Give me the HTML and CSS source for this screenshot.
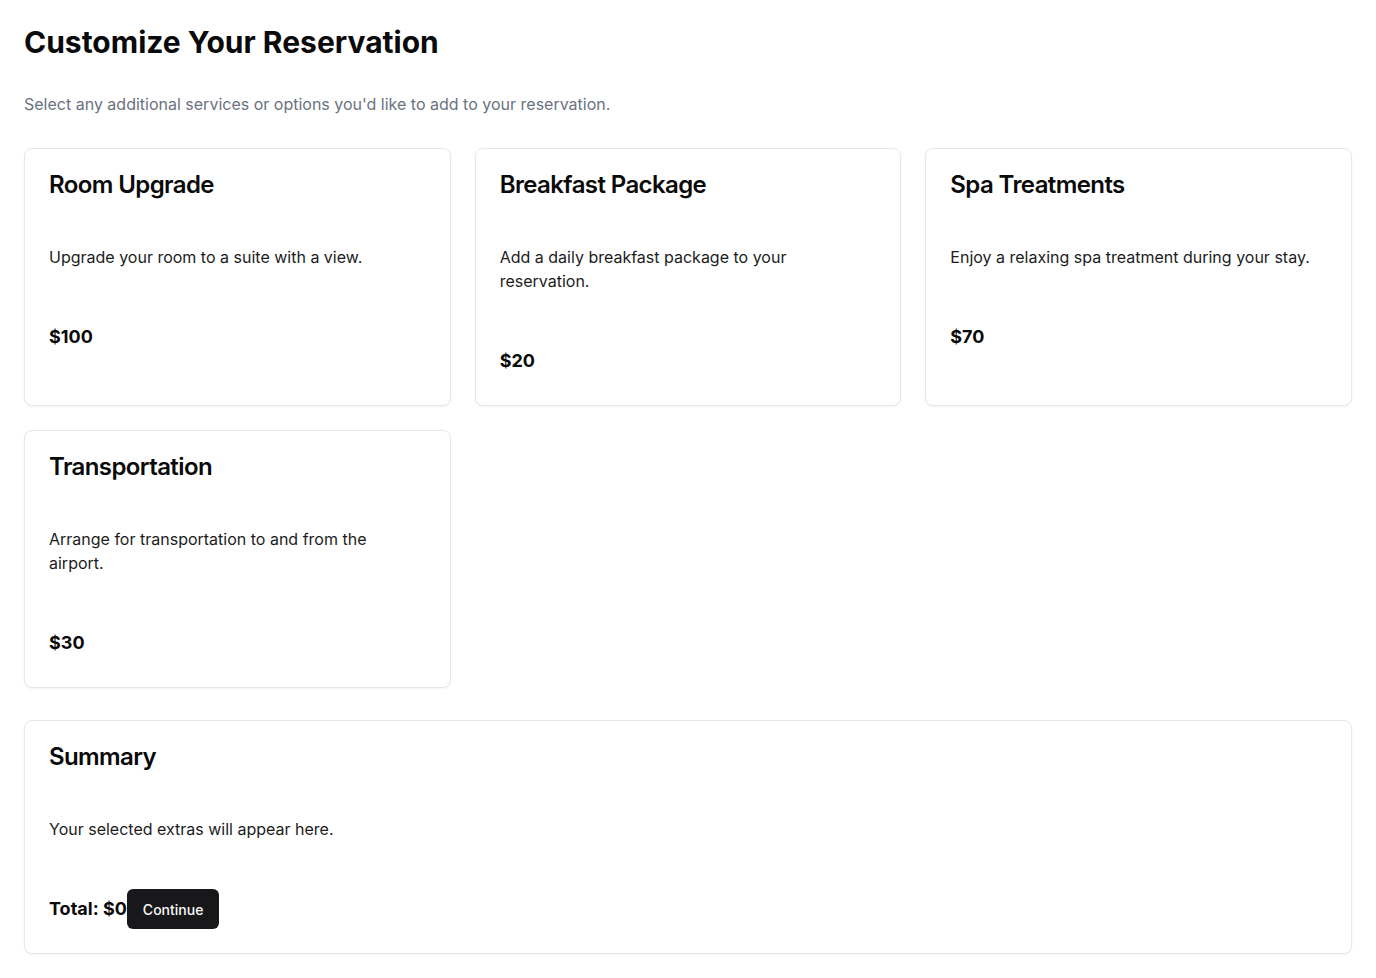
FILE: index.html
```html
<!DOCTYPE html>
<html lang="en">
<head>
<meta charset="utf-8">
<title>Customize Your Reservation</title>
<link rel="stylesheet" href="styles.css">
</head>
<body>
<main class="page">
  <h1 class="page-title">Customize Your Reservation</h1>
  <p class="page-subtitle">Select any additional services or options you'd like to add to your reservation.</p>

  <section class="grid">
    <div class="card">
      <div class="card-header"><h3 class="card-title">Room Upgrade</h3></div>
      <div class="card-content"><p class="card-text">Upgrade your room to a suite with a view.</p></div>
      <div class="card-footer"><p class="price">$100</p></div>
    </div>
    <div class="card">
      <div class="card-header"><h3 class="card-title">Breakfast Package</h3></div>
      <div class="card-content"><p class="card-text">Add a daily breakfast package to your reservation.</p></div>
      <div class="card-footer"><p class="price">$20</p></div>
    </div>
    <div class="card">
      <div class="card-header"><h3 class="card-title">Spa Treatments</h3></div>
      <div class="card-content"><p class="card-text">Enjoy a relaxing spa treatment during your stay.</p></div>
      <div class="card-footer"><p class="price">$70</p></div>
    </div>
    <div class="card">
      <div class="card-header"><h3 class="card-title">Transportation</h3></div>
      <div class="card-content"><p class="card-text">Arrange for transportation to and from the airport.</p></div>
      <div class="card-footer"><p class="price">$30</p></div>
    </div>
  </section>

  <section class="card summary">
    <div class="card-header"><h3 class="card-title">Summary</h3></div>
    <div class="card-content"><p class="card-text">Your selected extras will appear here.</p></div>
    <div class="card-footer">
      <p class="total">Total: $0</p>
      <button class="btn" type="button">Continue</button>
    </div>
  </section>
</main>
</body>
</html>
```
FILE: styles.css
```css
* { box-sizing: border-box; }

html, body {
  margin: 0;
  padding: 0;
  background: #ffffff;
}

body {
  font-family: Inter, "Noto Sans", "Liberation Sans", sans-serif;
  color: #0a0a0a;
}

.page {
  padding: 24px;
}

.page-title {
  margin: 0 0 32px;
  font-size: 30px;
  line-height: 36px;
  font-weight: 700;
  color: #0a0a0a;
}

.page-subtitle {
  margin: 0 0 32px;
  font-size: 16px;
  line-height: 24px;
  color: #6b7280;
}

.grid {
  display: grid;
  grid-template-columns: repeat(3, 1fr);
  gap: 24px;
  margin-bottom: 32px;
}

.card {
  background: #ffffff;
  border: 1px solid #e5e7eb;
  border-radius: 8px;
  box-shadow: 0 1px 2px rgba(0, 0, 0, 0.05);
}

.card-header,
.card-content,
.card-footer {
  padding: 24px;
}

.card-content {
  padding-right: 30px;
}

.card-title {
  margin: 0;
  font-size: 24px;
  line-height: 24px;
  font-weight: 600;
  letter-spacing: -0.025em;
  color: #0a0a0a;
}

.card-text {
  margin: 0;
  font-size: 16px;
  line-height: 24px;
  color: #1c1c1c;
}

.card-footer {
  display: flex;
  align-items: center;
  min-height: 88px;
}

.price,
.total {
  margin: 0;
  font-size: 18px;
  line-height: 28px;
  font-weight: 700;
  color: #0a0a0a;
}

.btn {
  height: 40px;
  padding: 0 16px;
  border: none;
  border-radius: 6px;
  background: #18181b;
  color: #fafafa;
  font-family: inherit;
  font-size: 14px;
  font-weight: 500;
  cursor: pointer;
}
```
